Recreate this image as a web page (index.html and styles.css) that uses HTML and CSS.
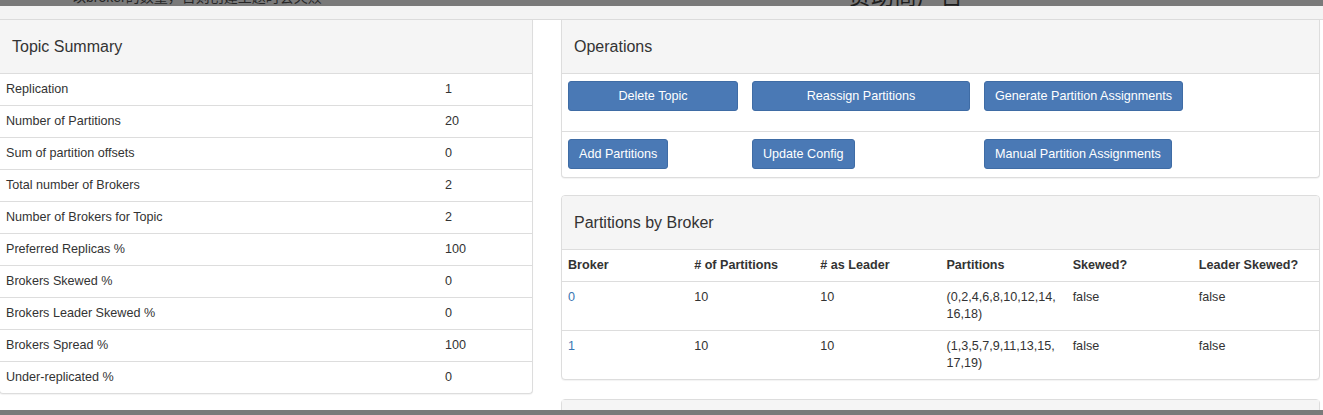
FILE: index.html
```html
<!DOCTYPE html>
<html lang="en">
<head>
<meta charset="utf-8">
<title>Topic</title>
<link rel="stylesheet" href="styles.css">
</head>
<body>
<div class="backdrop-top">
  <span class="ad-left">以broker的数量，否则创建主题时会失败</span>
  <span class="ad-right">赞助商广告</span>
</div>
<div class="navstrip"></div>
<div class="main">
  <div class="col-left">
    <div class="panel panel-top">
      <div class="panel-heading">Topic Summary</div>
      <table class="kv">
        <colgroup><col class="kv-label"><col></colgroup>
        <tbody>
          <tr><td>Replication</td><td>1</td></tr>
          <tr><td>Number of Partitions</td><td>20</td></tr>
          <tr><td>Sum of partition offsets</td><td>0</td></tr>
          <tr><td>Total number of Brokers</td><td>2</td></tr>
          <tr><td>Number of Brokers for Topic</td><td>2</td></tr>
          <tr><td>Preferred Replicas %</td><td>100</td></tr>
          <tr><td>Brokers Skewed %</td><td>0</td></tr>
          <tr><td>Brokers Leader Skewed %</td><td>0</td></tr>
          <tr><td>Brokers Spread %</td><td>100</td></tr>
          <tr><td>Under-replicated %</td><td>0</td></tr>
        </tbody>
      </table>
    </div>
  </div>
  <div class="col-right">
    <div class="panel panel-top ops">
      <div class="panel-heading">Operations</div>
      <div class="ops-row ops-row-first">
        <div class="ops-cell"><button class="btn btn-block">Delete Topic</button></div>
        <div class="ops-cell"><button class="btn btn-block">Reassign Partitions</button></div>
        <div class="ops-cell"><button class="btn">Generate Partition Assignments</button></div>
      </div>
      <div class="ops-row">
        <div class="ops-cell"><button class="btn">Add Partitions</button></div>
        <div class="ops-cell"><button class="btn">Update Config</button></div>
        <div class="ops-cell"><button class="btn">Manual Partition Assignments</button></div>
      </div>
    </div>
    <div class="panel brokers">
      <div class="panel-heading">Partitions by Broker</div>
      <table class="grid">
        <thead>
          <tr><th>Broker</th><th># of Partitions</th><th># as Leader</th><th>Partitions</th><th>Skewed?</th><th>Leader Skewed?</th></tr>
        </thead>
        <tbody>
          <tr><td><a class="link" href="#">0</a></td><td>10</td><td>10</td><td>(0,2,4,6,8,10,12,14,<wbr>16,18)</td><td>false</td><td>false</td></tr>
          <tr><td><a class="link" href="#">1</a></td><td>10</td><td>10</td><td>(1,3,5,7,9,11,13,15,<wbr>17,19)</td><td>false</td><td>false</td></tr>
        </tbody>
      </table>
    </div>
    <div class="panel stub">
      <div class="panel-heading"></div>
    </div>
  </div>
</div>
<div class="backdrop-bottom"></div>
</body>
</html>
```
FILE: styles.css
```css
html, body {
  margin: 0;
  padding: 0;
  overflow: hidden;
  background: #fff;
}
body {
  font-family: "Liberation Sans", Arial, sans-serif;
  font-size: 12.6px;
  line-height: 17px;
  color: #333;
}
.backdrop-top {
  position: relative;
  height: 6px;
  background: #7a7a7a;
  overflow: hidden;
}
.ad-left {
  position: absolute;
  left: 72px;
  top: -10px;
  font-family: "Liberation Sans", "Noto Sans CJK SC", sans-serif;
  font-size: 14px;
  line-height: 14px;
  color: #262626;
  white-space: nowrap;
}
.ad-right {
  position: absolute;
  left: 848px;
  top: -17px;
  font-family: "Noto Sans CJK SC", sans-serif;
  font-size: 23px;
  line-height: 23px;
  color: #1e1e1e;
  white-space: nowrap;
}
.navstrip {
  height: 13px;
  background: #f4f4f4;
  border-bottom: 1px solid #dcdcdc;
}
.main {
  display: flex;
  align-items: flex-start;
  gap: 28px;
  margin-left: -1px;
}
.col-left {
  width: 534px;
  flex: none;
}
.col-right {
  width: 759px;
  flex: none;
}
.panel {
  background: #fff;
  border: 1px solid #ddd;
  border-radius: 4px;
  box-shadow: 0 1px 1px rgba(0, 0, 0, 0.05);
}
.panel-top {
  border-top: none;
  border-radius: 0 0 4px 4px;
}
.panel-heading {
  display: flex;
  align-items: center;
  height: 53px;
  padding: 0 12px;
  background: #f5f5f5;
  border-bottom: 1px solid #ddd;
  font-size: 16px;
  color: #333;
}
.brokers .panel-heading {
  border-radius: 3px 3px 0 0;
}
.kv, .grid {
  width: 100%;
  border-collapse: collapse;
  table-layout: fixed;
}
.kv-label {
  width: 439px;
}
.kv td {
  padding: 7px 6px;
  border-top: 1px solid #ddd;
  vertical-align: top;
}
.kv tr:first-child td {
  border-top: none;
}
.ops {
  margin-bottom: 17px;
}
.ops-row {
  display: grid;
  grid-template-columns: 184px 232px 1fr;
  border-top: 1px solid #ddd;
}
.ops-row-first {
  border-top: none;
}
.ops-cell {
  padding: 7px 8px 8px 6px;
}
.ops-row-first .ops-cell {
  padding-bottom: 20px;
}
.btn {
  display: inline-block;
  box-sizing: border-box;
  height: 30px;
  padding: 0 10px;
  font-family: "Liberation Sans", Arial, sans-serif;
  font-size: 12.6px;
  line-height: 28px;
  color: #fff;
  background: #4a79b5;
  border: 1px solid #3f6ca5;
  border-radius: 3px;
  white-space: nowrap;
  cursor: pointer;
}
.btn-block {
  display: block;
  width: 100%;
  text-align: center;
}
.brokers {
  margin-bottom: 19px;
}
.grid th, .grid td {
  padding: 7px 8px 7px 6px;
  text-align: left;
  vertical-align: top;
  border-top: 1px solid #ddd;
}
.grid thead th {
  border-top: none;
  font-weight: bold;
}
.link {
  color: #3b76b3;
  text-decoration: none;
}
.stub .panel-heading {
  height: 60px;
}
.backdrop-bottom {
  position: fixed;
  left: 0;
  right: 0;
  bottom: 0;
  height: 5px;
  background: #7a7a7a;
}
```
